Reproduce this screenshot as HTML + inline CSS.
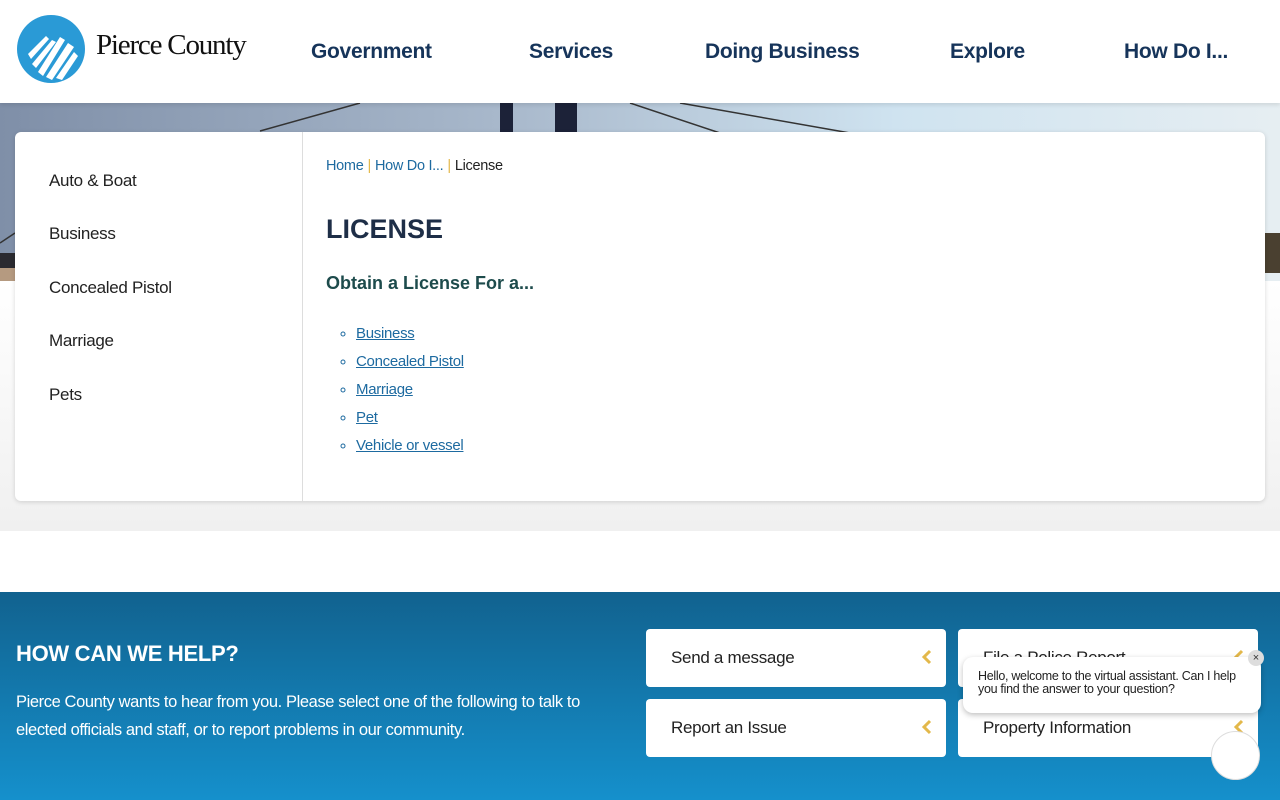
<!DOCTYPE html>
<html><head><meta charset="utf-8"><style>
*{margin:0;padding:0;box-sizing:border-box}
body{width:1280px;height:800px;overflow:hidden;font-family:"Liberation Sans",sans-serif;background:#fff;position:relative}
.hdr{position:absolute;top:0;left:0;width:1280px;height:103px;background:#fff;z-index:3;box-shadow:0 2px 4px rgba(0,0,0,.1)}
.logo{position:absolute;left:16px;top:14px}
.logotxt{position:absolute;left:96px;top:29px;font-family:"Liberation Serif",serif;font-size:29px;color:#111;letter-spacing:-1.2px}
.nav{position:absolute;top:40px;font-size:21px;font-weight:bold;color:#16345a;letter-spacing:-.3px}
.hero{position:absolute;top:103px;left:0;width:1280px;height:178px;background:linear-gradient(90deg,#7f8fa8 0%,#a9b9cc 40%,#cfe3f0 70%,#e6eef2 100%)}
.grey{position:absolute;top:281px;left:0;width:1280px;height:250px;background:linear-gradient(#fff,#f0f0f0)}
.card{position:absolute;left:15px;top:132px;width:1250px;height:369px;background:#fff;border-radius:6px;box-shadow:0 1px 5px rgba(0,0,0,.15);z-index:2}
.side{position:absolute;left:0;top:0;width:288px;height:369px;border-right:1px solid #ddd}
.side div{position:absolute;left:34px;font-size:17px;color:#222;letter-spacing:-.3px}
.main{position:absolute;left:311px;top:0}
.bc{position:absolute;top:26px;font-size:14.5px;white-space:nowrap;color:#222;letter-spacing:-.3px}
.bc a{color:#1d6aa0;text-decoration:none}
.bc span.s{color:#e3b84a;margin:0 4px}
h1{position:absolute;top:82px;font-size:27px;color:#1e2e47;white-space:nowrap}
h2{position:absolute;top:141px;font-size:18px;color:#1d4b4c;white-space:nowrap}
ul{position:absolute;top:188px;left:30px;list-style:circle;white-space:nowrap}
li{font-size:15px;line-height:28px;color:#1d6aa0;letter-spacing:-.3px}
li a{color:#1d6aa0;text-decoration:underline}
.foot{position:absolute;top:592px;left:0;width:1280px;height:208px;background:linear-gradient(#11628f,#1590cc)}
.foot h3{position:absolute;left:16px;top:49px;color:#fff;font-size:22px;letter-spacing:-.3px}
.foot p{position:absolute;left:16px;top:96px;color:#fff;font-size:16.5px;line-height:28px;width:600px;letter-spacing:-.4px}
.btn{position:absolute;width:300px;height:58px;background:#fff;border-radius:4px;font-size:17px;color:#222;padding:19px 0 0 25px;letter-spacing:-.3px}
.btn i{position:absolute;right:13px;top:19px}
.chat{position:absolute;left:963px;top:657px;width:298px;height:56px;background:#fff;border-radius:10px;box-shadow:0 2px 6px rgba(0,0,0,.25);font-size:12.5px;color:#222;padding:13px 15px;line-height:13px;letter-spacing:-.3px}
.x{position:absolute;left:1248px;top:650px;width:16px;height:16px;border-radius:50%;background:#ddd;font-size:11px;text-align:center;line-height:16px;color:#333}
.bub{position:absolute;left:1211px;top:731px;width:49px;height:49px;border-radius:50%;background:#fff;border:1px solid #ddd}
</style></head><body>
<div class="hdr">
<svg class="logo" width="70" height="70" viewBox="0 0 70 70"><defs><clipPath id="c"><circle cx="35" cy="35" r="34"/></clipPath></defs><circle cx="35" cy="35" r="34" fill="#2a9ad6"/>
<g clip-path="url(#c)" fill="#fff"><path d="M12 40 L30 22 L33 25 L15 45Z"/><path d="M16 50 L36 26 L40 28 L20 54Z"/><path d="M22 58 L44 23 L49 26 L27 62Z"/><path d="M30 63 L52 29 L58 33 L36 66Z"/><path d="M40 64 L58 38 L62 42 L46 66Z"/></g></svg>
<div class="logotxt">Pierce County</div>
<div class="nav" style="left:311px">Government</div>
<div class="nav" style="left:529px">Services</div>
<div class="nav" style="left:705px">Doing Business</div>
<div class="nav" style="left:950px">Explore</div>
<div class="nav" style="left:1124px">How Do I...</div>
</div>
<div class="hero">
<svg width="1280" height="178" style="position:absolute;left:0;top:0">
<rect x="500" y="0" width="13" height="30" fill="#1c2238"/><rect x="555" y="0" width="22" height="30" fill="#1c2238"/>
<g stroke="#333" stroke-width="1.5" fill="none"><path d="M260 28 L360 0"/><path d="M630 0 L720 30"/><path d="M680 0 L850 30"/><path d="M0 140 L15 130"/></g>
<rect x="0" y="150" width="15" height="20" fill="#2a2a30"/><rect x="1265" y="130" width="15" height="40" fill="#4a4030"/>
<rect x="0" y="165" width="15" height="13" fill="#b59a80"/>
</svg>
</div>
<div class="grey"></div>
<div class="card">
<div class="side">
<div style="top:39px">Auto &amp; Boat</div>
<div style="top:92px">Business</div>
<div style="top:146px">Concealed Pistol</div>
<div style="top:199px">Marriage</div>
<div style="top:253px">Pets</div>
</div>
<div class="main">
<div class="bc"><a>Home</a><span class="s">|</span><a>How Do I...</a><span class="s">|</span>License</div>
<h1>LICENSE</h1>
<h2>Obtain a License For a...</h2>
<ul><li><a>Business</a></li><li><a>Concealed Pistol</a></li><li><a>Marriage</a></li><li><a>Pet</a></li><li><a>Vehicle or vessel</a></li></ul>
</div>
</div>
<div class="foot">
<h3>HOW CAN WE HELP?</h3>
<p>Pierce County wants to hear from you. Please select one of the following to talk to elected officials and staff, or to report problems in our community.</p>
</div>
<div class="btn" style="left:646px;top:629px">Send a message<i><svg width="12" height="18"><path d="M9 3 L3 9 L9 15" stroke="#e3b84a" stroke-width="3" fill="none"/></svg></i></div>
<div class="btn" style="left:958px;top:629px">File a Police Report<i><svg width="12" height="18"><path d="M9 3 L3 9 L9 15" stroke="#e3b84a" stroke-width="3" fill="none"/></svg></i></div>
<div class="btn" style="left:646px;top:699px">Report an Issue<i><svg width="12" height="18"><path d="M9 3 L3 9 L9 15" stroke="#e3b84a" stroke-width="3" fill="none"/></svg></i></div>
<div class="btn" style="left:958px;top:699px">Property Information<i><svg width="12" height="18"><path d="M9 3 L3 9 L9 15" stroke="#e3b84a" stroke-width="3" fill="none"/></svg></i></div>
<div class="chat">Hello, welcome to the virtual assistant. Can I help you find the answer to your question?</div>
<div class="x">×</div>
<div class="bub"></div>
</body></html>
